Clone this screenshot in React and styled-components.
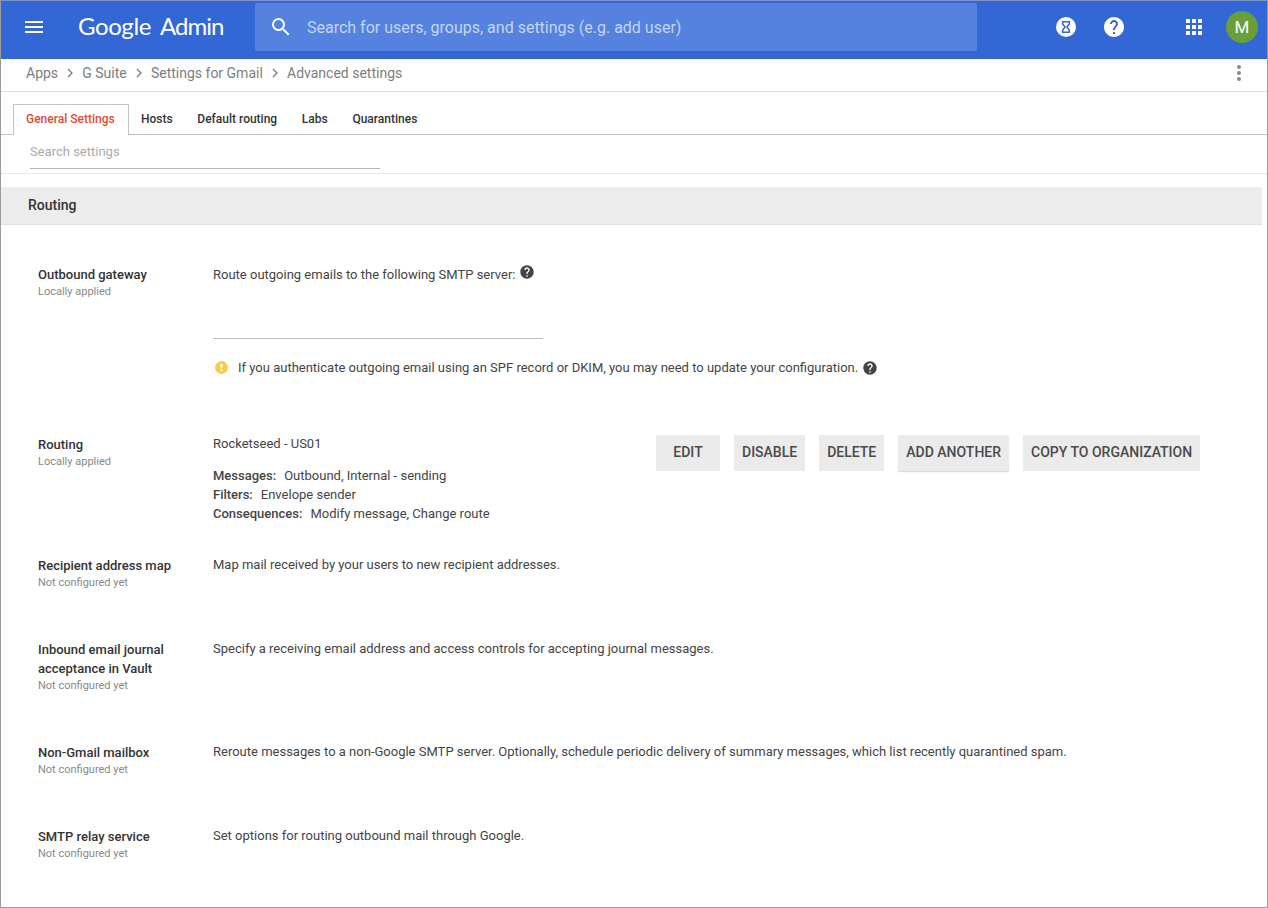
import React from "react";
import styled, { createGlobalStyle } from "styled-components";

const HELP_PATH =
  "M12 2C6.48 2 2 6.48 2 12s4.48 10 10 10 10-4.48 10-10S17.52 2 12 2zm1 17h-2v-2h2v2zm2.07-7.75l-.9.92C13.45 12.9 13 13.5 13 15h-2v-.5c0-1.1.45-2.1 1.17-2.83l1.24-1.26c.37-.36.59-.86.59-1.41 0-1.1-.9-2-2-2s-2 .9-2 2H8c0-2.21 1.79-4 4-4s4 1.79 4 4c0 .88-.36 1.68-.93 2.25z";

const crumbs = ["Apps", "G Suite", "Settings for Gmail", "Advanced settings"];
const tabs = ["General Settings", "Hosts", "Default routing", "Labs", "Quarantines"];
const actions = ["EDIT", "DISABLE", "DELETE", "ADD ANOTHER", "COPY TO ORGANIZATION"];

const GlobalStyle = createGlobalStyle`
  html, body {
    margin: 0;
    padding: 0;
    background: #fff;
  }
  body {
    font-family: Roboto, "Liberation Sans", sans-serif;
    font-size: 13px;
    color: #444;
  }
`;

const Page = styled.div`
  width: 1268px;
  height: 908px;
  box-sizing: border-box;
  border: 1px solid #9a9a9a;
  border-top-color: #7f95c9;
  overflow: hidden;
  background: #fff;
`;

const TopBar = styled.header`
  height: 58px;
  box-sizing: border-box;
  background: #3367d6;
  display: flex;
  align-items: center;
  padding: 0 9px 6px 21px;
  color: #fff;
`;

const MenuButton = styled.svg`
  width: 24px;
  height: 24px;
  fill: #fff;
  flex-shrink: 0;
`;

const Logo = styled.div`
  margin-left: 32px;
  width: 177px;
  padding-bottom: 3px;
  display: flex;
  gap: 9px;
  font-family: Lato, Roboto, sans-serif;
  font-size: 24px;
  white-space: nowrap;
`;

const LogoWord = styled.span`
  letter-spacing: ${(p) => p.$tracking}px;
`;

const SearchBox = styled.div`
  width: 722px;
  height: 48px;
  background: #5482de;
  border-radius: 2px;
  display: flex;
  align-items: center;
  padding-left: 14px;
  gap: 14px;
  box-sizing: border-box;
`;

const SearchIcon = styled.svg`
  width: 24px;
  height: 24px;
  fill: #fff;
`;

const SearchHint = styled.span`
  font-size: 16px;
  color: #c5d5f5;
`;

const BarIcons = styled.div`
  margin-left: auto;
  display: flex;
  align-items: center;
`;

const RoundIcon = styled.svg`
  width: 24px;
  height: 24px;
  fill: #fff;
  margin-right: ${(p) => p.$gap}px;
`;

const Avatar = styled.div`
  width: 32px;
  height: 32px;
  border-radius: 50%;
  background: #689f38;
  color: #fff;
  font-size: 17px;
  display: flex;
  align-items: center;
  justify-content: center;
`;

const Breadcrumbs = styled.nav`
  height: 33px;
  box-sizing: border-box;
  border-bottom: 1px solid #e0e0e0;
  display: flex;
  align-items: center;
  padding: 0 16px 4px 25px;
  font-size: 14px;
  color: #7d7d7d;
`;

const CrumbArrow = styled.svg`
  width: 8px;
  height: 10px;
  margin: 0 8.1px;
  fill: none;
  stroke: #757575;
  stroke-width: 1.2;
`;

const MoreIcon = styled.svg`
  margin-left: auto;
  width: 24px;
  height: 24px;
  fill: #8a8a8a;
`;

const TabBar = styled.div`
  height: 43px;
  box-sizing: border-box;
  border-bottom: 1px solid #c4c4c4;
  display: flex;
  align-items: flex-end;
  padding-left: 12px;
`;

const Tab = styled.div`
  height: 31px;
  box-sizing: border-box;
  padding: 0 12.35px;
  display: flex;
  align-items: center;
  font-size: 12px;
  font-weight: 500;
  color: ${(p) => (p.$active ? "#dd4b39" : "#333")};
  ${(p) =>
    p.$active &&
    `
    padding: 0 13px 2px 12px;
    border: 1px solid #c4c4c4;
    border-bottom: none;
    background: #fff;
    margin-bottom: -1px;
  `}
`;

const SearchRow = styled.div`
  height: 39px;
  box-sizing: border-box;
  border-bottom: 1px solid #e6e6e6;
  padding: 0 0 3px 29px;
`;

const SettingsSearch = styled.div`
  width: 350px;
  height: 34px;
  box-sizing: border-box;
  border-bottom: 1px solid #b5b5b5;
  padding-bottom: 1px;
  display: flex;
  align-items: center;
  font-size: 13px;
  color: #aaa;
`;

const SectionHead = styled.div`
  width: 1261px;
  height: 38px;
  box-sizing: border-box;
  margin-top: 13px;
  padding: 0 0 1px 27px;
  background: #ececec;
  border-bottom: 1px solid #e0e0e0;
  display: flex;
  align-items: center;
  font-size: 14px;
  font-weight: 500;
  color: #333;
`;

const Rows = styled.div`
  padding: 40px 0 0 37px;
`;

const Row = styled.section`
  display: grid;
  grid-template-columns: 175px 443px 1fr;
  height: ${(p) => p.$height}px;
  line-height: 19px;
`;

const Title = styled.div`
  font-size: 13px;
  font-weight: 500;
  color: #333;
`;

const Status = styled.div`
  font-size: 11px;
  line-height: 15px;
  color: #888;
`;

const Detail = styled.div`
  grid-column: ${(p) => (p.$wide ? "2 / 4" : "auto")};
  margin-top: -1px;
  font-size: 13px;
  color: #444;
`;

const HelpIcon = styled.svg`
  width: 16px;
  height: 16px;
  fill: #444;
  margin-left: 4px;
  vertical-align: -1px;
`;

const GatewayInput = styled.div`
  width: 330px;
  height: 1px;
  background: #bdbdbd;
  margin-top: 54px;
`;

const Notice = styled.div`
  margin-top: 19px;
  display: flex;
  align-items: center;
  white-space: nowrap;
`;

const WarnIcon = styled.svg`
  width: 13px;
  height: 13px;
  margin-right: 10px;
  margin-left: 2px;
`;

const Summary = styled.div`
  margin-top: 13px;
`;

const Field = styled.b`
  font-weight: 500;
  margin-right: 8px;
`;

const Actions = styled.div`
  display: flex;
  gap: 14px;
  align-items: flex-start;
`;

const ActionButton = styled.button`
  height: 36px;
  padding: 0 8px 2px;
  min-width: 64px;
  border: none;
  border-radius: 0;
  background: #ebebeb;
  font-family: Roboto, sans-serif;
  font-size: 14px;
  font-weight: 500;
  color: #4a4a4a;
  white-space: nowrap;
  box-shadow: ${(p) => (p.$raised ? "0 1px 1px rgba(0, 0, 0, 0.14)" : "none")};
`;

function Help() {
  return (
    <HelpIcon viewBox="0 0 24 24">
      <path d={HELP_PATH} />
    </HelpIcon>
  );
}

export default function App() {
  return (
    <>
      <GlobalStyle />
      <Page>
        <TopBar>
          <MenuButton viewBox="0 0 24 24">
            <path d="M3 18h18v-2H3v2zm0-5h18v-2H3v2zm0-7v2h18V6H3z" />
          </MenuButton>
          <Logo>
            <LogoWord $tracking={-0.4}>Google</LogoWord>
            <LogoWord $tracking={-1}>Admin</LogoWord>
          </Logo>
          <SearchBox>
            <SearchIcon viewBox="0 0 24 24">
              <path d="M15.5 14h-.79l-.28-.27A6.47 6.47 0 0 0 16 9.5 6.5 6.5 0 1 0 9.5 16c1.61 0 3.09-.59 4.23-1.57l.27.28v.79l5 4.99L20.49 19l-4.99-5zm-6 0C7.01 14 5 11.99 5 9.5S7.01 5 9.5 5 14 7.01 14 9.5 11.99 14 9.5 14z" />
            </SearchIcon>
            <SearchHint>Search for users, groups, and settings (e.g. add user)</SearchHint>
          </SearchBox>
          <BarIcons>
            <RoundIcon $gap={24} viewBox="0 0 24 24">
              <circle cx="12" cy="12" r="10" />
              <path
                d="M8.700 6.700h6.600v2.400L12.900 12l2.400 2.900v2.400H8.700v-2.400L11.100 12 8.700 9.100z"
                fill="none"
                stroke="#3367d6"
                strokeWidth="1.5"
              />
            </RoundIcon>
            <RoundIcon $gap={56} viewBox="0 0 24 24">
              <path d={HELP_PATH} />
            </RoundIcon>
            <RoundIcon $gap={20} viewBox="0 0 24 24">
              <path d="M4 4h4v4H4zM10 4h4v4h-4zM16 4h4v4h-4zM4 10h4v4H4zM10 10h4v4h-4zM16 10h4v4h-4zM4 16h4v4H4zM10 16h4v4h-4zM16 16h4v4h-4z" />
            </RoundIcon>
            <Avatar>M</Avatar>
          </BarIcons>
        </TopBar>

        <Breadcrumbs>
          {crumbs.map((crumb, idx) => (
            <React.Fragment key={crumb}>
              {idx > 0 && (
                <CrumbArrow viewBox="0 0 8 10">
                  <path d="M2 1l4 4-4 4" />
                </CrumbArrow>
              )}
              <span>{crumb}</span>
            </React.Fragment>
          ))}
          <MoreIcon viewBox="0 0 24 24">
            <circle cx="12" cy="6" r="2" />
            <circle cx="12" cy="12" r="2" />
            <circle cx="12" cy="18" r="2" />
          </MoreIcon>
        </Breadcrumbs>

        <TabBar>
          {tabs.map((tab, idx) => (
            <Tab key={tab} $active={idx === 0}>
              {tab}
            </Tab>
          ))}
        </TabBar>

        <SearchRow>
          <SettingsSearch>Search settings</SettingsSearch>
        </SearchRow>

        <SectionHead>Routing</SectionHead>

        <Rows>
          <Row $height={170}>
            <div>
              <Title>Outbound gateway</Title>
              <Status>Locally applied</Status>
            </div>
            <Detail $wide>
              Route outgoing emails to the following SMTP server:
              <Help />
              <GatewayInput />
              <Notice>
                <WarnIcon viewBox="0 0 14 14">
                  <circle cx="7" cy="7" r="7" fill="#f7cb4d" />
                  <rect x="6" y="3" width="2" height="5" fill="#fff" />
                  <rect x="6" y="9" width="2" height="2" fill="#fff" />
                </WarnIcon>
                If you authenticate outgoing email using an SPF record or DKIM, you may need to update your configuration.
                <Help />
              </Notice>
            </Detail>
          </Row>

          <Row $height={121}>
            <div>
              <Title>Routing</Title>
              <Status>Locally applied</Status>
            </div>
            <Detail>
              Rocketseed - US01
              <Summary>
                <div>
                  <Field>Messages:</Field>Outbound, Internal - sending
                </div>
                <div>
                  <Field>Filters:</Field>Envelope sender
                </div>
                <div>
                  <Field>Consequences:</Field>Modify message, Change route
                </div>
              </Summary>
            </Detail>
            <Actions>
              {actions.map((action) => (
                <ActionButton key={action} $raised={action === "ADD ANOTHER"}>
                  {action}
                </ActionButton>
              ))}
            </Actions>
          </Row>

          <Row $height={84}>
            <div>
              <Title>Recipient address map</Title>
              <Status>Not configured yet</Status>
            </div>
            <Detail $wide>Map mail received by your users to new recipient addresses.</Detail>
          </Row>

          <Row $height={103}>
            <div>
              <Title>
                Inbound email journal
                <br />
                acceptance in Vault
              </Title>
              <Status>Not configured yet</Status>
            </div>
            <Detail $wide>Specify a receiving email address and access controls for accepting journal messages.</Detail>
          </Row>

          <Row $height={84}>
            <div>
              <Title>Non-Gmail mailbox</Title>
              <Status>Not configured yet</Status>
            </div>
            <Detail $wide>
              Reroute messages to a non-Google SMTP server. Optionally, schedule periodic delivery of summary messages, which list recently quarantined spam.
            </Detail>
          </Row>

          <Row $height={60}>
            <div>
              <Title>SMTP relay service</Title>
              <Status>Not configured yet</Status>
            </div>
            <Detail $wide>Set options for routing outbound mail through Google.</Detail>
          </Row>
        </Rows>
      </Page>
    </>
  );
}
